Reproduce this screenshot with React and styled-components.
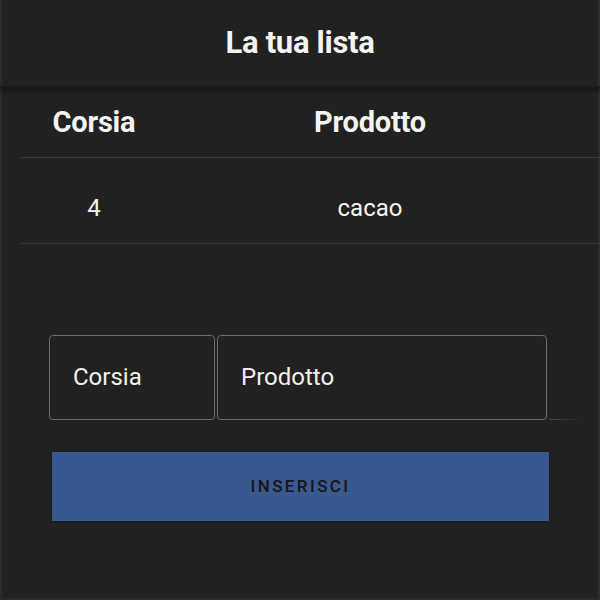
import React from 'react'
import styled, { createGlobalStyle } from 'styled-components'

const GlobalStyle = createGlobalStyle`
  html, body {
    margin: 0;
    padding: 0;
    background: #212121;
  }
  body {
    font-family: Roboto, "Liberation Sans", sans-serif;
    color: #f4f4f0;
  }
`

const Page = styled.main`
  min-height: 600px;
  box-sizing: border-box;
  box-shadow: inset 2px 0 0 #2a2a2a, inset -2px 0 0 #2c2c2c, inset 0 -2px 0 #2a2a2a;
`

const TitleBar = styled.header`
  height: 86px;
  display: flex;
  align-items: center;
  justify-content: center;
  box-shadow: 0 2px 3px rgba(0, 0, 0, 0.35);
  border-bottom: 3px solid #1a1a1a;
`

const Title = styled.h1`
  margin: 0;
  padding-bottom: 2px;
  font-size: 31px;
  font-weight: 700;
  letter-spacing: -0.3px;
`

const Table = styled.section`
  margin-left: 21px;
  margin-top: 2px;
`

const Row = styled.div`
  display: grid;
  grid-template-columns: 146px 406px;
  align-items: center;
  height: ${p => p.h}px;
  padding-top: ${p => p.pt || 0}px;
  padding-bottom: ${p => p.pb || 0}px;
  box-sizing: border-box;
  border-bottom: 1px solid #3b3b3b;
`

const Cell = styled.div`
  text-align: center;
  font-size: ${p => (p.head ? 29 : 24)}px;
  font-weight: ${p => (p.head ? 700 : 400)};
  letter-spacing: ${p => (p.head ? '-0.2px' : '0')};
`

const Form = styled.form`
  margin: 91px 0 0 49px;
  display: flex;
  flex-direction: column;
  gap: 32px;
`

const InputRow = styled.div`
  display: flex;
  gap: 2px;
`

const Field = styled.div`
  width: ${p => p.w}px;
  height: 85px;
  box-sizing: border-box;
  border: 1px solid #6c6c6c;
  border-radius: 4px;
  display: flex;
  align-items: center;
  padding: 0 0 2px 23px;
  font-size: 24px;
  color: #f2f2ea;
`

const Tail = styled.div`
  width: 30px;
  height: 85px;
  box-sizing: border-box;
  border-bottom: 1px solid;
  border-image: linear-gradient(to right, #4a4a4a, rgba(74, 74, 74, 0)) 1;
`

const Button = styled.button`
  width: 497px;
  height: 69px;
  margin-left: 3px;
  padding-bottom: 3px;
  border: none;
  background: #385890;
  color: #1c1414;
  font-family: Roboto, "Liberation Sans", sans-serif;
  font-size: 17px;
  font-weight: 500;
  letter-spacing: 2.4px;
  text-transform: uppercase;
  box-shadow: 0 1px 2px rgba(0, 0, 0, 0.4);
  cursor: pointer;
`

const items = [{ aisle: 4, product: 'cacao' }]

const App = () => (
  <>
    <GlobalStyle />
    <Page>
      <TitleBar>
        <Title>La tua lista</Title>
      </TitleBar>
      <Table>
        <Row h={67} pb={5}>
          <Cell head>Corsia</Cell>
          <Cell head>Prodotto</Cell>
        </Row>
        {items.map(item => (
          <Row key={item.product} h={86} pt={14}>
            <Cell>{item.aisle}</Cell>
            <Cell>{item.product}</Cell>
          </Row>
        ))}
      </Table>
      <Form onSubmit={e => e.preventDefault()}>
        <InputRow>
          <Field w={166}>Corsia</Field>
          <Field w={330}>Prodotto</Field>
          <Tail />
        </InputRow>
        <Button type="submit">Inserisci</Button>
      </Form>
    </Page>
  </>
)

export default App
